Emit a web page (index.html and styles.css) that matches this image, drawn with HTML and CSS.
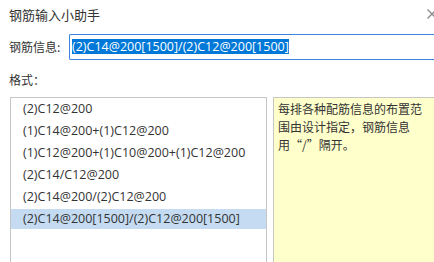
FILE: index.html
```html
<!DOCTYPE html>
<html lang="zh-CN">
<head>
<meta charset="utf-8">
<title>钢筋输入小助手</title>
<link rel="stylesheet" href="styles.css">
</head>
<body>
<div class="dialog">
  <div class="titlebar">
    <span class="title">钢筋输入小助手</span>
    <svg class="close" width="10" height="10" viewBox="0 0 10 10"><path d="M0.5 0.5 L9.5 9.5 M9.5 0.5 L0.5 9.5" stroke="#8a8a8a" stroke-width="1.3" fill="none"/></svg>
  </div>
  <div class="info-row">
    <span class="label">钢筋信息:</span>
    <div class="field"><span class="sel">(2)C14@200[1500]/(2)C12@200[1500]</span></div>
  </div>
  <div class="format-label">格式：</div>
  <div class="panes">
    <ul class="list">
      <li class="item">(2)C12@200</li>
      <li class="item">(1)C14@200+(1)C12@200</li>
      <li class="item">(1)C12@200+(1)C10@200+(1)C12@200</li>
      <li class="item">(2)C14/C12@200</li>
      <li class="item">(2)C14@200/(2)C12@200</li>
      <li class="item selected">(2)C14@200[1500]/(2)C12@200[1500]</li>
    </ul>
    <div class="note">每排各种配筋信息的布置范<br>围由设计指定，钢筋信息<br>用“/”隔开。</div>
  </div>
</div>
</body>
</html>
```
FILE: styles.css
```css
html, body {
  margin: 0;
  padding: 0;
  background: #fff;
  overflow: hidden;
}
body {
  width: 434px;
  height: 262px;
}
.dialog {
  width: 434px;
  height: 262px;
  overflow: hidden;
  font-family: "Open Sans", "Noto Sans CJK SC", sans-serif;
  color: #333;
}
.titlebar {
  display: flex;
  align-items: center;
  justify-content: space-between;
  height: 30px;
  padding: 0 0 0 9px;
  margin-bottom: 4px;
  margin-right: -3px;
  overflow: hidden;
}
.title {
  font-family: "Noto Sans CJK SC", sans-serif;
  font-size: 13px;
  line-height: 30px;
}
.close {
  display: block;
  flex: none;
  margin-top: -2px;
}
.info-row {
  display: flex;
  align-items: center;
  padding: 0 0 0 9px;
  height: 26px;
}
.label {
  width: 60px;
  flex: none;
  font-family: "Noto Sans CJK SC", sans-serif;
  font-size: 12px;
  line-height: 18px;
}
.field {
  flex: 1;
  box-sizing: border-box;
  height: 26px;
  border: 1px solid #3a84db;
  border-right: none;
  border-radius: 2px 0 0 2px;
  padding: 4px 0 0 2px;
  font-size: 12.5px;
  line-height: 15px;
  white-space: nowrap;
}
.sel {
  display: inline-block;
  background: #0078d7;
  color: #fff;
  line-height: 15px;
  height: 15px;
}
.format-label {
  margin-top: 11px;
  padding-left: 9px;
  font-family: "Noto Sans CJK SC", sans-serif;
  font-size: 12px;
  line-height: 18px;
}
.panes {
  display: flex;
  gap: 6px;
  margin-top: 8px;
  padding: 0 0 0 10px;
  height: 165px;
}
.list {
  list-style: none;
  margin: 0;
  padding: 1px 0 0 0;
  width: 257px;
  flex: none;
  box-sizing: border-box;
  border: 1px solid #c6c6c6;
  border-bottom: none;
  display: flex;
  flex-direction: column;
  gap: 2px;
}
.item {
  height: 20px;
  line-height: 20px;
  padding-left: 12px;
  font-size: 12.5px;
  white-space: nowrap;
}
.item.selected {
  background: #c4dbf2;
}
.note {
  flex: 1;
  box-sizing: border-box;
  background: #ffffcc;
  border: 1px solid #c6c6c6;
  border-right: none;
  border-bottom: none;
  padding: 2px 4px 0 4px;
  font-family: "Noto Sans CJK SC", sans-serif;
  font-size: 12px;
  line-height: 18px;
}
```
